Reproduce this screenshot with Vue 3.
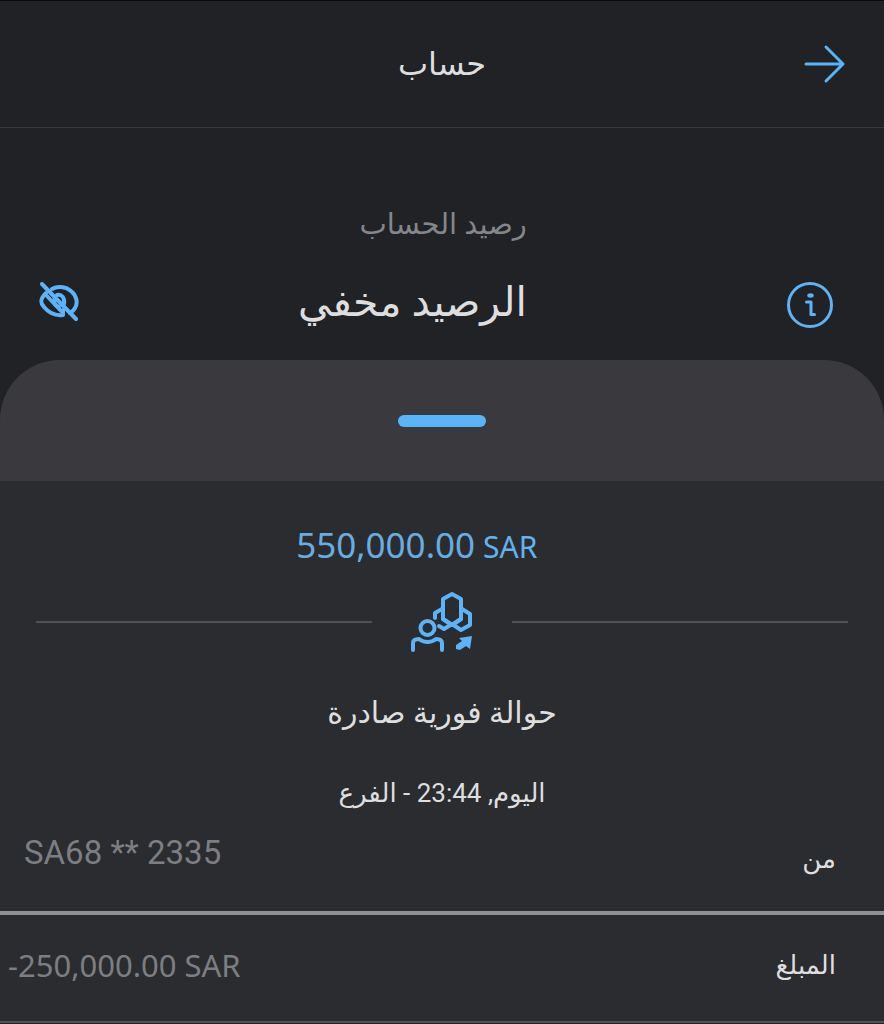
<template>
  <main class="account" dir="rtl" lang="ar">
    <header class="top-bar">
      <button class="icon-btn back" type="button" aria-label="رجوع">
        <svg width="42" height="40" viewBox="0 0 42 40">
          <path d="M2 20H39M22 3L39 20L22 37" />
        </svg>
      </button>
      <h1 class="title">{{ title }}</h1>
    </header>

    <section class="balance">
      <p class="balance-label">رصيد الحساب</p>
      <button class="icon-btn info" type="button" aria-label="معلومات">
        <svg width="46" height="46" viewBox="0 0 46 46">
          <circle cx="23" cy="23" r="21.5" />
          <path d="M19.500 20H24V32.500H27.500" />
          <ellipse class="dot" cx="23.500" cy="13.500" rx="3.200" ry="2.200" />
        </svg>
      </button>
      <p class="balance-value">الرصيد مخفي</p>
      <button class="icon-btn eye" type="button" aria-label="إظهار الرصيد">
        <svg width="40" height="40" viewBox="0 0 40 40">
          <path d="M13 7C18 4 26 4 32 9C38 14 39 21 36 26C35 28 33 30 31 31" />
          <path d="M7 11C1 17 1 21 5 25C10 31 16 34 24 33V28" />
          <path d="M8 14L24 31" />
          <path d="M18 13C23 12 26 16 25 22" />
          <path d="M15 18C15 22 17 24 20 25" />
          <path d="M3 2L37 37" />
        </svg>
      </button>
    </section>

    <div class="sheet-head">
      <span class="handle"></span>
    </div>

    <section class="details">
      <p class="amount" dir="ltr">
        <span>550,000.00</span>
        <span class="currency">SAR</span>
      </p>

      <div class="divider">
        <svg width="64" height="62" viewBox="0 0 64 62">
          <path d="M33 8L42 3L51 8V28L42 34L33 28Z" />
          <path d="M32 18L25 22V27" />
          <path d="M52 18L60 23V34L51 39L42 33L34 38L29 35" />
          <path d="M33 28L42 34L51 28" />
          <circle cx="17.500" cy="37" r="7" />
          <path d="M3 59V52C3 49 5 48 9 48C14 52 21 52 26 48C30 48 32 49 32 52V59" />
          <path class="solid" d="M62 45L60 58L56 55L50 59L46 58V54L52 50L49 47Z" />
        </svg>
      </div>

      <h2 class="kind">حوالة فورية صادرة</h2>
      <p class="when">اليوم, 23:44 - الفرع</p>

      <dl class="rows">
        <div v-for="row in rows" :key="row.label" class="row" :class="row.type">
          <dt>{{ row.label }}</dt>
          <dd dir="ltr">{{ row.value }}</dd>
        </div>
      </dl>
    </section>
  </main>
</template>

<script setup>
import { ref } from 'vue'

const title = ref('حساب')

const rows = ref([
  { label: 'من', value: 'SA68 ** 2335', type: 'from' },
  { label: 'المبلغ', value: '-250,000.00 SAR', type: 'total' },
])
</script>

<style>
body {
  margin: 0;
  background: #2b2c30;
}
</style>

<style scoped>
.account {
  --blue: #5cb3f7;
  min-height: 100vh;
  background: #212226;
  color: #dededf;
  font-family: Roboto, 'DejaVu Sans', sans-serif;
}

h1,
h2,
p,
dl,
dd {
  margin: 0;
  font-weight: 400;
}

svg {
  display: block;
  fill: none;
  stroke: var(--blue);
  stroke-width: 3;
  stroke-linecap: round;
  stroke-linejoin: round;
}

.icon-btn {
  padding: 0;
  border: 0;
  background: none;
  cursor: pointer;
}

/* ---- 顶栏 ---- */
.top-bar {
  display: grid;
  grid-template-columns: 1fr auto 1fr;
  align-items: center;
  height: 128px;
  padding: 0 38px;
  box-sizing: border-box;
  border-top: 1px solid #08090b;
  border-bottom: 1px solid #38393d;
}

.back {
  justify-self: start;
}

.title {
  font-size: 32px;
  line-height: 40px;
}

/* ---- 余额 ---- */
.balance {
  display: grid;
  grid-template-columns: 13fr auto 11fr;
  align-items: center;
  row-gap: 28px;
  padding: 76px 51px 28px 39px;
}

.balance-label {
  grid-column: 2;
  color: #85868a;
  font-size: 29px;
  line-height: 40px;
}

.balance-value {
  font-size: 41px;
  line-height: 60px;
}

.info {
  grid-column: 1;
  justify-self: start;
  padding-top: 6px;
}

.eye {
  justify-self: end;
}

.eye svg {
  stroke-width: 4;
}

.info .dot {
  fill: var(--blue);
  stroke: none;
}

/* ---- 抽屉 ---- */
.sheet-head {
  display: flex;
  align-items: center;
  justify-content: center;
  height: 121px;
  border-radius: 60px 60px 0 0;
  background: #3a393d;
}

.handle {
  width: 88px;
  height: 12px;
  border-radius: 6px;
  background: #58b4fb;
}

.details {
  background: #2b2c30;
}

.amount {
  display: flex;
  align-items: baseline;
  gap: 8px;
  padding: 40px 0 0 33.5%;
  color: #67ade0;
  font-family: 'Noto Sans', sans-serif;
  font-size: 35px;
  line-height: 48px;
}

.currency {
  color: #62b2ee;
  font-size: 30px;
}

.divider {
  display: flex;
  align-items: center;
  gap: 38px;
  padding: 20px 36px;
}

.divider::before,
.divider::after {
  content: '';
  flex: 1;
  height: 2px;
  background: #505155;
}

.divider svg {
  stroke-width: 4;
}

.divider .solid {
  fill: var(--blue);
  stroke: none;
}

.kind {
  font-size: 30px;
  line-height: 40px;
  padding-top: 20px;
  text-align: center;
}

.when {
  padding-top: 40px;
  font-size: 26px;
  line-height: 40px;
  text-align: center;
}

.row {
  display: flex;
  align-items: flex-start;
  justify-content: space-between;
  height: 108px;
  padding: 30px 48px 0 8px;
  box-sizing: border-box;
  border-bottom: 2px solid #505155;
  font-size: 26px;
  line-height: 40px;
}

.row dd {
  color: #7d7e81;
  font-family: 'Noto Sans', sans-serif;
  font-size: 31px;
}

.from {
  height: 102px;
  padding-top: 20px;
  padding-left: 24px;
  border-bottom: 4px solid #8f9093;
}

.from dt {
  padding-top: 6px;
}

.from dd {
  font-family: Roboto, sans-serif;
  font-size: 33px;
}
</style>
